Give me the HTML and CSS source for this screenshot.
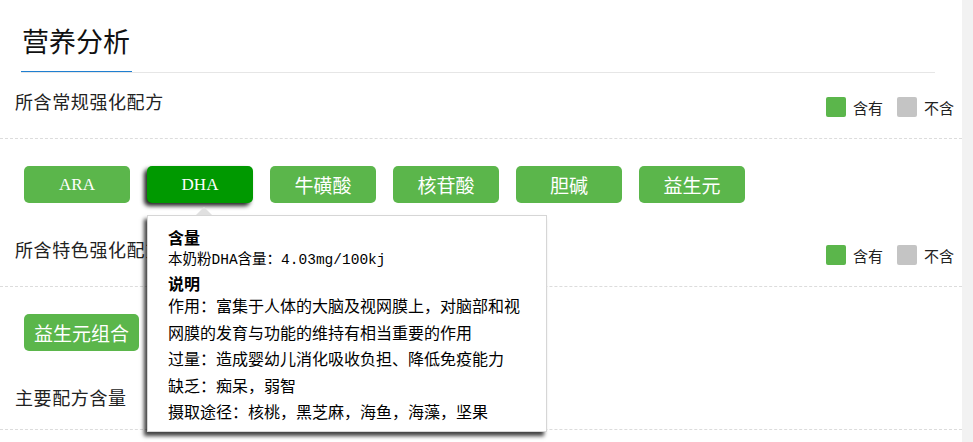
FILE: index.html
```html
<!DOCTYPE html>
<html lang="zh-CN">
<head>
    <meta charset="UTF-8">
    <title>营养分析</title>
    <link rel="stylesheet" href="styles.css">
</head>
<body>
    <div class="page">
        <div class="main">
            <div class="title-bar">
                <h2>营养分析</h2>
            </div>

            <div class="sec-head">
                <span class="sec-name">所含常规强化配方</span>
                <div class="legend">
                    <i class="dot on"></i><span>含有</span>
                    <i class="dot off"></i><span>不含</span>
                </div>
            </div>
            <ul class="tags">
                <li class="en">ARA</li>
                <li class="en active">DHA
                    <div class="tip">
                        <b>含量</b>
                        <p class="amount">本奶粉DHA含量：4.03mg/100kj</p>
                        <b>说明</b>
                        <p class="desc">作用：富集于人体的大脑及视网膜上，对脑部和视网膜的发育与功能的维持有相当重要的作用</p>
                        <p class="desc">过量：造成婴幼儿消化吸收负担、降低免疫能力</p>
                        <p class="desc">缺乏：痴呆，弱智</p>
                        <p class="desc">摄取途径：核桃，黑芝麻，海鱼，海藻，坚果</p>
                    </div>
                </li>
                <li>牛磺酸</li>
                <li>核苷酸</li>
                <li>胆碱</li>
                <li>益生元</li>
            </ul>

            <div class="sec-head">
                <span class="sec-name">所含特色强化配方</span>
                <div class="legend">
                    <i class="dot on"></i><span>含有</span>
                    <i class="dot off"></i><span>不含</span>
                </div>
            </div>
            <ul class="tags">
                <li>益生元组合</li>
            </ul>

            <div class="sec-head">
                <span class="sec-name">主要配方含量</span>
            </div>
        </div>
        <div class="side"></div>
    </div>
</body>
</html>
```

FILE: styles.css
```css
*{
    margin: 0;
    padding: 0;
}
li{
    list-style: none;
}
body{
    background: #fff;
    color: #333;
    font-family: "Liberation Serif", "Noto Sans CJK SC", serif;
}
.page{
    display: flex;
    height: 442px;
    overflow: hidden;
}
.main{
    width: 962px;
}
.side{
    flex: 1;
    background: #f2f2f2;
}
.title-bar{
    display: flex;
    margin: 0 27px 0 21px;
    padding-top: 22px;
    border-bottom: 1px solid #e6e6e6;
}
.title-bar h2{
    font-family: "Noto Sans CJK SC", sans-serif;
    font-weight: normal;
    font-size: 27px;
    line-height: 40px;
    color: #111;
    padding: 0 2px 10px 1px;
    margin-bottom: -1px;
    border-bottom: 1px solid #1f7fd1;
    /* 下边线压住灰线上面一像素 */
    position: relative;
    top: -1px;
}
.sec-head{
    display: flex;
    justify-content: space-between;
    align-items: flex-start;
    padding: 20px 8px 20px 15px;
    border-bottom: 1px dashed #dcdcdc;
}
.sec-name{
    font-size: 18px;
    line-height: 20px;
    letter-spacing: 0.6px;
    color: #222;
}
.legend{
    display: flex;
    align-items: center;
    margin-top: 3px;
    height: 22px;
    font-family: "Noto Sans CJK SC", sans-serif;
    font-size: 15px;
    color: #222;
}
.dot{
    width: 20px;
    height: 20px;
    border-radius: 2px;
    margin-right: 7px;
}
.dot.on{
    background: #5bb64b;
}
.dot.off{
    background: #c4c4c4;
    margin-left: 14px;
}
.tags{
    display: flex;
    gap: 17px;
    padding: 27px 0 18px 24px;
}
.tags>li{
    position: relative;
    min-width: 106px;
    height: 37px;
    line-height: 37px;
    padding: 0 10px;
    box-sizing: border-box;
    border-radius: 5px;
    background: #5bb64b;
    color: #fff;
    text-align: center;
    font-family: "Noto Sans CJK SC", sans-serif;
    font-size: 19px;
}
.tags>li.en{
    font-family: "Liberation Serif", serif;
    font-size: 17px;
}
.tags>li.active{
    background: #009900;
    box-shadow: -3px 3px 4px rgba(0,0,0,0.85);
}
.tip{
    position: absolute;
    left: 0;
    top: 49px;
    z-index: 10;
    width: 400px;
    height: 217px;
    box-sizing: border-box;
    padding: 10px 20px 0 20px;
    background: #fff;
    border: 1px solid #d6d6d6;
    box-shadow: -3px 4px 4px rgba(0,0,0,0.75);
    text-align: left;
    color: #000;
    font-family: "Noto Sans CJK SC", sans-serif;
    font-size: 16px;
    line-height: 23px;
}
/* 小三角 */
.tip::before{
    content: "";
    position: absolute;
    left: 48px;
    top: -9px;
    border: 8px solid transparent;
    border-top: 0;
    border-bottom-color: #e0e0e0;
    border-bottom-width: 8px;
}
.tip b{
    display: block;
    font-size: 16px;
}
.tip .amount{
    font-family: "Liberation Mono", "Noto Sans CJK SC", monospace;
    font-size: 14.5px;
}
.tip .desc{
    line-height: 26.5px;
    font-size: 16px;
}
.tip b + .desc{
    margin-top: -3px;
}
```
